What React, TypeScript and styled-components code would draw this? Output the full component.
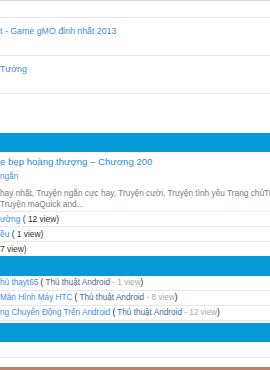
import React from "react";
import styled, { createGlobalStyle } from "styled-components";

const GlobalStyle = createGlobalStyle`
  html, body {
    margin: 0;
    padding: 0;
    background: #fff;
  }
  body {
    font-family: "Liberation Sans", Arial, sans-serif;
  }
`;

const Page = styled.div`
  width: 270px;
  height: 370px;
  overflow: hidden;
  display: flex;
  flex-direction: column;
  white-space: nowrap;
`;

const Link = styled.a<{ $size?: number }>`
  color: #3b8de0;
  text-decoration: none;
  font-size: ${(p) => p.$size ?? 8.4}px;
`;

// tail of the row above the visible area
const RowTail = styled.div`
  height: 17px;
  box-sizing: border-box;
  border-top: 1px solid #d4d4d4;
`;

const TopList = styled.div`
  border-bottom: 1px solid #e6e6e6;
`;

const TopRow = styled.div`
  height: 38px;
  box-sizing: border-box;
  border-top: 1px solid #e6e6e6;
  padding-top: 5px;
  line-height: 12px;
`;

const BlueBar = styled.div<{ $h: number; $mt?: number }>`
  height: ${(p) => p.$h}px;
  margin-top: ${(p) => p.$mt ?? 0}px;
  background: #079ad9;
  flex-shrink: 0;
`;

const Post = styled.div`
  padding: 3px 0 1px;
  display: flex;
  flex-direction: column;
`;

const PostTitle = styled.a`
  color: #2e88da;
  font-size: 9.6px;
  line-height: 14px;
  text-decoration: none;
`;

const PostCat = styled.a`
  margin-top: 2px;
  color: #4a8fd6;
  font-size: 8.2px;
  line-height: 12px;
  text-decoration: none;
`;

const Desc = styled.div`
  margin-top: 5px;
  color: #7a7a7a;
  font-size: 8.3px;
  line-height: 11px;
  overflow: hidden;
  span {
    display: block;
  }
`;

const ViewRow = styled.div`
  height: 15px;
  box-sizing: border-box;
  border-top: 1px solid #e6e6e6;
  line-height: 14px;
  font-size: 8.4px;
  color: #333;
`;

const AndroidRow = styled.div`
  height: 15px;
  box-sizing: border-box;
  border-bottom: 1px solid #e6e6e6;
  line-height: 14px;
  font-size: 8.2px;
  color: #222;
`;

const Cat = styled.span`
  color: #4b6690;
`;

const Count = styled.span`
  color: #a8a8a8;
`;

const Footer = styled.div`
  height: 15px;
  flex-shrink: 0;
  border-bottom: 1px solid #e6e6e6;
`;

const FooterEdge = styled.div`
  margin-top: 9px;
  height: 3px;
  flex-shrink: 0;
  background: #b4846c;
`;

const views = [
  { title: "ường", count: 12 },
  { title: "ều", count: 1 },
  { title: "", count: 7, cut: "7 view)" },
];

const android = [
  { title: "hủ thayt65", count: 1 },
  { title: "Màn Hình Máy HTC", count: 8 },
  { title: "ng Chuyển Động Trên Android", count: 12 },
];

export default function App() {
  return (
    <Page>
      <GlobalStyle />
      <RowTail />
      <TopList>
        <TopRow>
          <Link $size={8.8} href="#">t - Game gMO đỉnh nhất 2013</Link>
        </TopRow>
        <TopRow>
          <Link $size={8.8} href="#">Tướng</Link>
        </TopRow>
      </TopList>

      <BlueBar $h={19} $mt={39} />
      <Post>
        <PostTitle href="#">e bẹp hoàng thượng – Chương 200</PostTitle>
        <PostCat href="#">ngắn</PostCat>
        <Desc>
          <span>hay nhất, Truyện ngắn cực hay, Truyện cười, Truyện tình yêu Trang chủTruyện</span>
          <span>Truyện maQuick and...</span>
        </Desc>
      </Post>
      {views.map((v, i) => (
        <ViewRow key={i}>
          {v.cut ? v.cut : (
            <>
              <Link href="#">{v.title}</Link> ( {v.count} view)
            </>
          )}
        </ViewRow>
      ))}

      <BlueBar $h={20} />
      {android.map((a) => (
        <AndroidRow key={a.title}>
          <Link $size={8.2} href="#">{a.title}</Link> ( <Cat>Thủ thuật Android</Cat>{" "}
          <Count>- {a.count} view</Count>)
        </AndroidRow>
      ))}

      <BlueBar $h={19} $mt={2} />
      <Footer />
      <FooterEdge />
    </Page>
  );
}
